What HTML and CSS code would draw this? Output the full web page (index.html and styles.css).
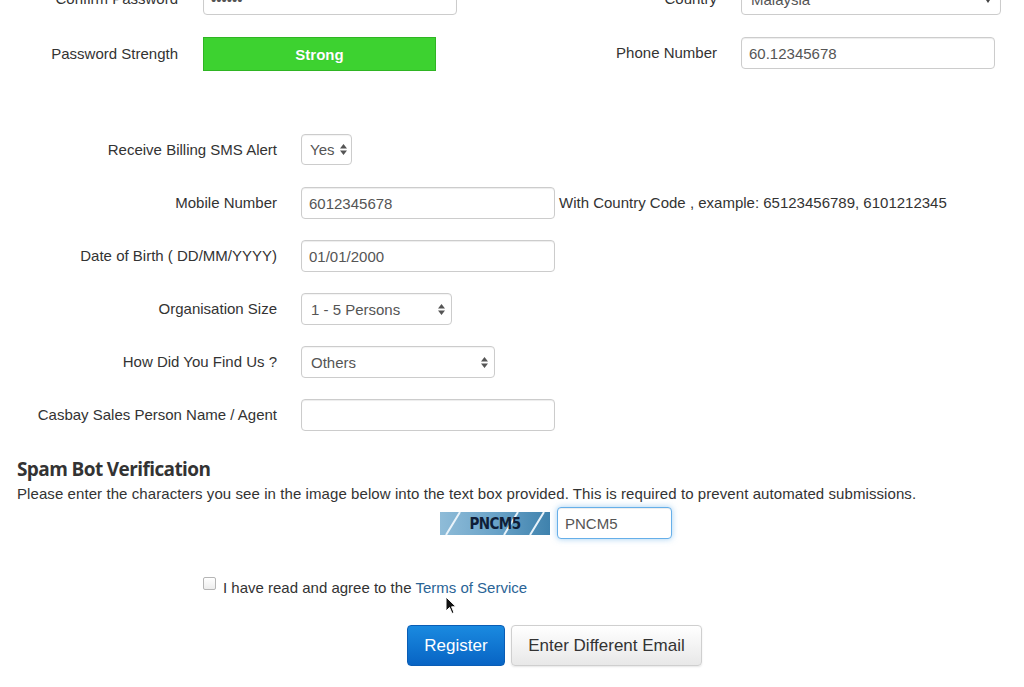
FILE: index.html
```html
<!DOCTYPE html>
<html>
<head>
<meta charset="utf-8">
<link rel="stylesheet" href="styles.css">
</head>
<body>
<div class="page">
  <div class="top">
    <div class="half half-left">
      <label class="lbl">Confirm Password</label>
      <input class="field w254" type="text" value="••••••">
      <label class="lbl">Password Strength</label>
      <div class="strength">Strong</div>
    </div>
    <div class="half half-right">
      <label class="lbl">Country</label>
      <div class="sel w260">
        <span class="sel-text">Malaysia</span>
        <svg class="caret-down" width="8" height="6" viewBox="0 0 8 6"><path d="M0 0h8L4 6z" fill="#444"/></svg>
      </div>
      <label class="lbl">Phone Number</label>
      <input class="field w254" type="text" value="60.12345678">
    </div>
  </div>

  <div class="form">
    <label class="lbl">Receive Billing SMS Alert</label>
    <div class="sel sel-sms">
      <span class="sel-text">Yes</span>
      <svg class="updown" width="7" height="11" viewBox="0 0 7 11"><path d="M0 4.5L3.5 0L7 4.5z M0 6.5L3.5 11L7 6.5z" fill="#555"/></svg>
    </div>

    <label class="lbl">Mobile Number</label>
    <div class="inline">
      <input class="field w254" type="text" value="6012345678">
      <span class="help">With Country Code , example: 65123456789, 6101212345</span>
    </div>

    <label class="lbl">Date of Birth ( DD/MM/YYYY)</label>
    <div><input class="field w254" type="text" value="01/01/2000"></div>

    <label class="lbl">Organisation Size</label>
    <div class="sel sel-org">
      <span class="sel-text">1 - 5 Persons</span>
      <svg class="updown" width="7" height="11" viewBox="0 0 7 11"><path d="M0 4.5L3.5 0L7 4.5z M0 6.5L3.5 11L7 6.5z" fill="#555"/></svg>
    </div>

    <label class="lbl">How Did You Find Us ?</label>
    <div class="sel sel-find">
      <span class="sel-text">Others</span>
      <svg class="updown" width="7" height="11" viewBox="0 0 7 11"><path d="M0 4.5L3.5 0L7 4.5z M0 6.5L3.5 11L7 6.5z" fill="#555"/></svg>
    </div>

    <label class="lbl">Casbay Sales Person Name / Agent</label>
    <div><input class="field w254" type="text" value=""></div>
  </div>

  <h3 class="spam-title">Spam Bot Verification</h3>
  <p class="spam-desc">Please enter the characters you see in the image below into the text box provided. This is required to prevent automated submissions.</p>

  <div class="captcha-row">
    <svg class="captcha" width="110" height="23" viewBox="0 0 110 23">
      <defs>
        <linearGradient id="cg" x1="0" y1="0" x2="1" y2="0">
          <stop offset="0" stop-color="#8fbcd8"/>
          <stop offset="0.5" stop-color="#6aa3c8"/>
          <stop offset="1" stop-color="#3f82ad"/>
        </linearGradient>
      </defs>
      <rect width="110" height="23" fill="url(#cg)"/>
      <path d="M6 23L20 0M64 23L78 0M90 23L104 0" stroke="#e9f3fa" stroke-width="2"/>
      <text x="55" y="17" text-anchor="middle" class="captcha-text">PNCM5</text>
    </svg>
    <input class="field captcha-input" type="text" value="PNCM5">
  </div>

  <div class="agree-row">
    <span class="checkbox"></span>
    <span class="agree-text">I have read and agree to the <a class="tos" href="#">Terms of Service</a></span>
  </div>

  <div class="btn-row">
    <button class="btn btn-primary">Register</button>
    <button class="btn btn-default">Enter Different Email</button>
  </div>
</div>

<svg class="cursor" width="12" height="19" viewBox="0 0 12 19">
  <path d="M1 1L1 15L4.5 11.5L7 17.5L9 16.6L6.6 10.8L11 10.8Z" fill="#111" stroke="#fff" stroke-width="1"/>
</svg>
</body>
</html>
```

FILE: styles.css
```css
html, body {
  margin: 0;
  padding: 0;
  background: #ffffff;
}
body {
  font-family: "Liberation Sans", Arial, Helvetica, sans-serif;
  font-size: 15px;
  color: #333333;
  overflow: hidden;
  height: 687px;
  position: relative;
}
.page {
  margin-top: -17px;
}

/* top two-column block */
.top {
  display: flex;
  align-items: flex-start;
}
.half {
  display: grid;
  align-items: center;
  align-content: start;
  row-gap: 22px;
}
.half-left {
  width: 538px;
  grid-template-columns: 178px auto;
  column-gap: 25px;
}
.half-right {
  grid-template-columns: 179px auto;
  column-gap: 24px;
}
.lbl {
  text-align: right;
  color: #333;
  font-size: 15px;
  white-space: nowrap;
  margin-top: -2px;
}

.field {
  box-sizing: border-box;
  height: 32px;
  padding: 4px 7px;
  font-family: "Liberation Sans", Arial, sans-serif;
  font-size: 15px;
  color: #555;
  background: #fff;
  border: 1px solid #cccccc;
  border-radius: 4px;
  box-shadow: inset 0 1px 1px rgba(0,0,0,0.075);
  outline: none;
}
.w254 { width: 254px; }
.w260 { width: 260px; }

.strength {
  box-sizing: border-box;
  width: 233px;
  height: 34px;
  background: #3dd230;
  border: 1px solid #2fb523;
  color: #ffffff;
  font-weight: bold;
  font-size: 15px;
  display: flex;
  align-items: center;
  justify-content: center;
  text-shadow: 0 0 1px rgba(0,0,0,0.15);
}

/* select look-alikes */
.sel {
  box-sizing: border-box;
  height: 32px;
  display: flex;
  align-items: center;
  justify-content: space-between;
  padding: 0 6px 0 9px;
  border: 1px solid #cccccc;
  border-radius: 4px;
  background: #fff;
  color: #555;
  font-size: 15px;
  box-shadow: inset 0 1px 1px rgba(0,0,0,0.05);
}
.sel-sms { width: 51px; height: 31px; padding: 0 4px 0 8px; margin-top: -1px; }
.sel-org { width: 151px; }
.sel-find { width: 194px; }
.caret-down { margin-right: 2px; margin-top: 2px; }

/* lower form */
.form {
  margin-top: 63px;
  display: grid;
  grid-template-columns: 277px auto;
  grid-auto-rows: 32px;
  column-gap: 24px;
  row-gap: 21px;
  align-items: center;
  justify-items: start;
}
.form .lbl { justify-self: end; }
.inline {
  display: flex;
  align-items: center;
}
.help {
  margin-left: 4px;
  margin-top: -2px;
  font-size: 15px;
  color: #333;
  white-space: nowrap;
}

.spam-title {
  margin: 27px 0 0 17px;
  font-family: "Open Sans", "DejaVu Sans", sans-serif;
  font-weight: 700;
  font-size: 19px;
  letter-spacing: -0.6px;
  line-height: 22px;
  color: #333;
}
.spam-desc {
  margin: 5px 0 0 17px;
  font-size: 15px;
  line-height: 17px;
  letter-spacing: 0.08px;
  color: #333;
  white-space: nowrap;
}

.captcha-row {
  margin-top: 5px;
  margin-left: 440px;
  display: flex;
  align-items: center;
  gap: 7px;
}
.captcha { display: block; }
.captcha-text {
  font-family: "DejaVu Sans Condensed", "DejaVu Sans", sans-serif;
  font-weight: bold;
  font-size: 15px;
  fill: #0f1e38;
  letter-spacing: -0.6px;
}
.captcha-input {
  width: 115px;
  border-color: #66afe9;
  box-shadow: inset 0 1px 1px rgba(0,0,0,0.075), 0 0 6px rgba(102,175,233,0.6);
}

.agree-row {
  margin-top: 38px;
  margin-left: 203px;
  display: flex;
  align-items: flex-start;
}
.checkbox {
  box-sizing: border-box;
  width: 13px;
  height: 13px;
  border: 1px solid #b5b5b5;
  border-radius: 2px;
  background: linear-gradient(#fff, #ededed);
}
.agree-text {
  margin-left: 7px;
  margin-top: 2px;
  font-size: 15px;
  line-height: 17px;
  color: #333;
}
.tos {
  color: #2a6496;
  text-decoration: none;
}

.btn-row {
  margin-top: 29px;
  margin-left: 407px;
  display: flex;
  gap: 6px;
}
.btn {
  box-sizing: border-box;
  height: 41px;
  border-radius: 4px;
  font-family: "Liberation Sans", Arial, sans-serif;
  font-size: 17px;
  padding: 0;
  cursor: pointer;
}
.btn-primary {
  width: 98px;
  color: #fff;
  border: 1px solid #0a5db5;
  background: linear-gradient(#1a8ae0, #0864c4);
}
.btn-default {
  width: 191px;
  color: #333;
  border: 1px solid #cfcfcf;
  background: linear-gradient(#ffffff, #e8e8e8);
  box-shadow: 0 1px 2px rgba(0,0,0,0.1);
}

.cursor {
  position: absolute;
  left: 445px;
  top: 596px;
}
```
